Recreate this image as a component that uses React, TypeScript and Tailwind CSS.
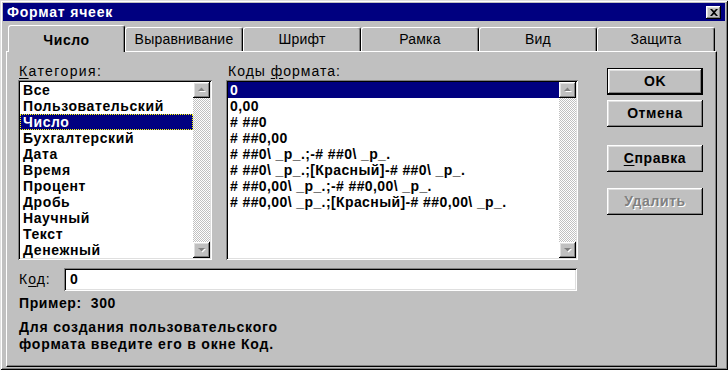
import React from "react";

const font = "font-['Liberation_Sans',Arial,sans-serif]";

const raised =
  "shadow-[inset_-1px_-1px_#000,inset_1px_1px_#fff,inset_-2px_-2px_#808080,inset_2px_2px_#dfdfdf]";
const sunken =
  "shadow-[inset_1px_1px_#808080,inset_-1px_-1px_#fff,inset_2px_2px_#000,inset_-2px_-2px_#dfdfdf]";

function Arrow({ down }: { down?: boolean }) {
  return (
    <svg width="9" height="6" viewBox="0 0 9 6">
      {down ? (
        <>
          <polygon points="2,2 9,2 5.5,5.5" fill="#fff" />
          <polygon points="1,1 8,1 4.5,4.5" fill="#808080" />
        </>
      ) : (
        <>
          <polygon points="5.5,1.5 9,5 2,5" fill="#fff" />
          <polygon points="4.5,0.5 8,4 1,4" fill="#808080" />
        </>
      )}
    </svg>
  );
}

function ScrollBar() {
  return (
    <div className="w-[17px] h-full flex flex-col bg-[repeating-conic-gradient(#c0c0c0_0%_25%,#fff_0%_50%)] bg-[length:2px_2px]">
      <div className={`h-[16px] bg-[#c0c0c0] flex items-center justify-center ${raised}`}>
        <Arrow />
      </div>
      <div className="flex-1" />
      <div className={`h-[16px] bg-[#c0c0c0] flex items-center justify-center ${raised}`}>
        <Arrow down />
      </div>
    </div>
  );
}

const categories = [
  "Все",
  "Пользовательский",
  "Число",
  "Бухгалтерский",
  "Дата",
  "Время",
  "Процент",
  "Дробь",
  "Научный",
  "Текст",
  "Денежный",
];

const codes = [
  "0",
  "0,00",
  "# ##0",
  "# ##0,00",
  "# ##0\\ _р_.;-# ##0\\ _р_.",
  "# ##0\\ _р_.;[Красный]-# ##0\\ _р_.",
  "# ##0,00\\ _р_.;-# ##0,00\\ _р_.",
  "# ##0,00\\ _р_.;[Красный]-# ##0,00\\ _р_.",
];

const tabs = ["Выравнивание", "Шрифт", "Рамка", "Вид", "Защита"];

function Button({
  children,
  isDefault,
  disabled,
  className = "",
}: {
  children: React.ReactNode;
  isDefault?: boolean;
  disabled?: boolean;
  className?: string;
}) {
  return (
    <div
      className={`w-[96px] h-[27px] ${isDefault ? "border border-black" : ""} ${className}`}
    >
      <div
        className={`w-full h-full flex items-center justify-center font-bold ${raised} ${
          disabled ? "text-[#808080] [text-shadow:1px_1px_0_#fff]" : "text-black"
        }`}
      >
        {children}
      </div>
    </div>
  );
}

export default function App() {
  return (
    <div
      className={`w-[728px] h-[370px] bg-[#c0c0c0] p-[3px] flex flex-col text-[14px] tracking-[0.6px] text-black ${font} shadow-[inset_1px_1px_#dfdfdf,inset_-1px_-1px_#000,inset_2px_2px_#fff,inset_-2px_-2px_#808080]`}
    >
      {/* Title bar */}
      <div className="h-[18px] bg-[#000080] flex items-center justify-between pl-[4px] pr-[4px]">
        <span className="text-white font-bold text-[14px] tracking-[0.8px] leading-none">
          Формат ячеек
        </span>
        <div
          className={`w-[15px] h-[13px] bg-[#c0c0c0] flex items-center justify-center ${raised}`}
        >
          <svg width="8" height="7" viewBox="0 0 8 7">
            <path d="M0 0h2l2 2 2-2h2L5 3.5 8 7H6L4 5 2 7H0l3-3.5z" fill="#000" />
          </svg>
        </div>
      </div>

      {/* Tabs */}
      <div className="flex items-end h-[26px] mt-[4px] pl-[5px] tracking-[0.2px]">
        <div className="relative z-10 w-[117px] h-[27px] -mb-px bg-[#c0c0c0] border-l border-t border-white border-r border-r-black rounded-t-[3px] shadow-[inset_-1px_0_#808080] flex items-center justify-center pt-[2px] font-bold tracking-[0.6px]">
          Число
        </div>
        {tabs.map((t) => (
          <div
            key={t}
            className="w-[118px] h-[24px] bg-[#c0c0c0] border-l border-t border-white border-r border-r-black rounded-t-[3px] shadow-[inset_-1px_0_#808080] flex items-center justify-center"
          >
            {t}
          </div>
        ))}
      </div>

      {/* Panel */}
      <div className="ml-[3px] w-[711px] flex-1 border-l border-t border-white border-r border-b border-r-black border-b-black shadow-[inset_-1px_-1px_#808080] flex pl-[11px] pt-[11px]">
        <div className="w-[560px] flex flex-col">
          <div className="flex">
            {/* Category */}
            <div className="w-[194px] flex flex-col">
              <div className="h-[16px] leading-[16px] pl-[1px] tracking-[1.4px]">
                <span className="underline underline-offset-2">К</span>атегория:
              </div>
              <div className={`mt-[1px] h-[180px] bg-white p-[2px] flex ${sunken}`}>
                <div className="flex-1 font-bold">
                  {categories.map((c) => (
                    <div
                      key={c}
                      className={`h-[16px] leading-[16px] pl-[3px] ${
                        c === "Число"
                          ? "bg-[#000080] text-white outline-1 outline-dotted outline-[#ffff00] -outline-offset-1"
                          : ""
                      }`}
                    >
                      {c}
                    </div>
                  ))}
                </div>
                <ScrollBar />
              </div>
            </div>

            {/* Codes */}
            <div className="ml-[14px] w-[352px] flex flex-col">
              <div className="h-[16px] leading-[16px] pl-[2px] tracking-[1px]">
                Коды <span className="underline underline-offset-2">ф</span>ормата:
              </div>
              <div className={`mt-[1px] h-[180px] bg-white p-[2px] flex ${sunken}`}>
                <div className="flex-1 font-bold tracking-[0.4px]">
                  {codes.map((c, i) => (
                    <div
                      key={c}
                      className={`h-[16px] leading-[16px] pl-[2px] whitespace-pre ${
                        i === 0 ? "bg-[#000080] text-white" : ""
                      }`}
                    >
                      {c}
                    </div>
                  ))}
                </div>
                <ScrollBar />
              </div>
            </div>
          </div>

          {/* Code input */}
          <div className="flex items-center mt-[8px] pl-[1px]">
            <div className="w-[45px] tracking-[1px]">
              К<span className="underline underline-offset-2">о</span>д:
            </div>
            <div
              className={`w-[513px] h-[23px] bg-white pl-[6px] flex items-center font-bold ${sunken}`}
            >
              0
            </div>
          </div>

          <div className="mt-[4px] h-[16px] leading-[16px] pl-[1px] font-bold whitespace-pre">
            Пример:  300
          </div>
          <div className="mt-[8px] leading-[17px] pl-[1px] font-bold tracking-[0.8px]">
            Для создания пользовательского
            <br />
            формата введите его в окне Код.
          </div>
        </div>

        {/* Buttons */}
        <div className="ml-[29px] mt-[5px] flex flex-col">
          <Button isDefault>OK</Button>
          <Button className="mt-[5px]">Отмена</Button>
          <Button className="mt-[18px]">
            <span>
              <span className="underline underline-offset-2">С</span>правка
            </span>
          </Button>
          <Button disabled className="mt-[16px]">
            Удалить
          </Button>
        </div>
      </div>
    </div>
  );
}
